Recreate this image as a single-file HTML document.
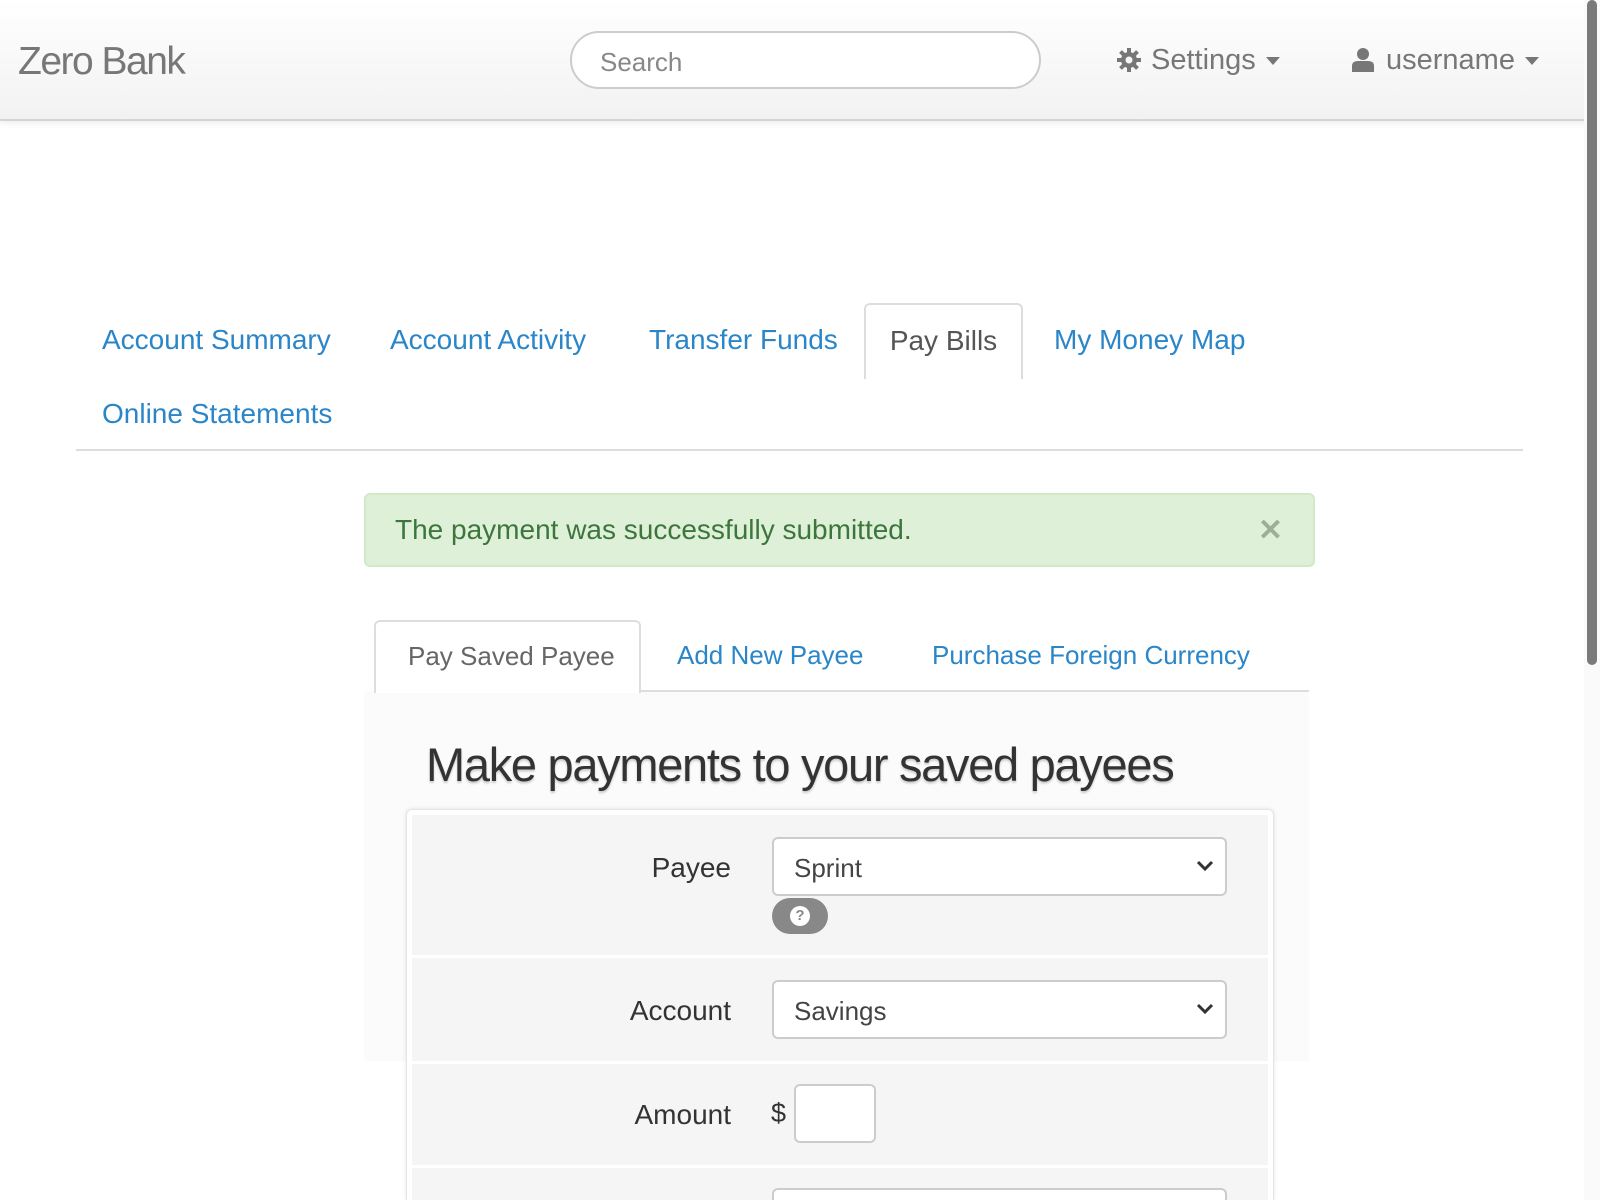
<!DOCTYPE html>
<html style="width:1600px;height:1200px;overflow:hidden"><head><style>
*{box-sizing:border-box}
body{margin:0;width:1600px;height:1200px;overflow:hidden;background:#fff;font-family:"Liberation Sans",Arial,sans-serif;position:relative}
.nav{position:absolute;left:0;top:0;width:1600px;height:121px;background:linear-gradient(#fff,#f2f2f2);border-bottom:2px solid #d4d4d4;box-shadow:0 2px 6px rgba(0,0,0,.08)}
.brand{position:absolute;left:18px;top:40px;font-size:39px;color:#777;letter-spacing:-1.5px}
.search{position:absolute;left:570px;top:31px;width:471px;height:58px;border:2px solid #ccc;border-radius:29px;background:#fff;font-size:26px;color:#888;padding:14px 28px}
.menu{position:absolute;top:44px;font-size:29px;color:#777}
.caret{display:inline-block;width:0;height:0;border-left:7px solid transparent;border-right:7px solid transparent;border-top:8px solid #777;vertical-align:middle;margin-left:10px}
.sb{position:absolute;right:0;top:0;width:16px;height:1200px;background:#fafafa}
.sb div{position:absolute;left:3px;top:0;width:10px;height:665px;border-radius:5px;background:#7a7a7a}
.tab{position:absolute;font-size:28px;color:#2a86c8}
.act{position:absolute;left:864px;top:303px;width:159px;height:76px;border:2px solid #ddd;border-bottom:none;border-radius:6px 6px 0 0;background:#fff;color:#555;font-size:28px;text-align:center;padding-top:20px}
.hr{position:absolute;left:76px;top:449px;width:1447px;height:2px;background:#ddd}
.alert{position:absolute;left:364px;top:493px;width:951px;height:74px;background:#dff0d8;border:2px solid #d0e9c6;border-radius:6px;color:#3c763d;font-size:28px;padding:19px 29px}
.alert span{position:absolute;right:30px;top:18px;font-size:30px;color:#9fae9a;font-weight:bold}
.pane{position:absolute;left:364px;top:691px;width:945px;height:370px;background:#fbfbfb}
.stab{position:absolute;font-size:26px;color:#2a86c8;top:640px}
.sact{position:absolute;left:374px;top:620px;width:267px;height:73px;border:2px solid #ddd;border-bottom:none;border-radius:6px 6px 0 0;background:#fff;color:#666;font-size:26px;padding:19px 0 0 32px}
.sline{position:absolute;left:641px;top:690px;width:668px;height:2px;background:#ddd}
h1{position:absolute;left:426px;top:737px;margin:0;font-size:47px;font-weight:normal;color:#333;letter-spacing:-1.3px;text-shadow:0 2px 2px rgba(0,0,0,.2)}
.form{position:absolute;left:406px;top:809px;width:868px;height:391px;background:#fff;border:1px solid #e5e5e5;border-bottom:none;border-radius:6px 6px 0 0;box-shadow:0 0 4px rgba(0,0,0,.1)}
.row{position:absolute;left:412px;width:856px;background:#f5f5f5;border-bottom:3px solid #fff}
.lbl{position:absolute;right:537px;font-size:28px;color:#333}
.sel{position:absolute;left:360px;width:455px;height:59px;background:#fff;border:2px solid #ccc;border-radius:6px;font-size:26px;color:#444;padding:14px 20px}
.sel svg{position:absolute;right:10px;top:20px}
</style></head><body>
<div class="nav">
<div class="brand">Zero Bank</div>
<div class="search">Search</div>
<div class="menu" style="left:1117px"><svg width="24" height="24" viewBox="0 0 24 24" style="vertical-align:-3px;margin-right:10px"><g fill="#777"><circle cx="12" cy="12" r="8"/><rect x="10" y="0" width="4" height="24"/><rect x="0" y="10" width="24" height="4"/><rect x="10" y="0" width="4" height="24" transform="rotate(45 12 12)"/><rect x="10" y="0" width="4" height="24" transform="rotate(-45 12 12)"/></g><circle cx="12" cy="12" r="3.5" fill="#f7f7f7"/></svg>Settings<span class="caret"></span></div>
<div class="menu" style="left:1352px"><svg width="22" height="24" viewBox="0 0 22 24" style="vertical-align:-3px;margin-right:12px"><circle cx="11" cy="6" r="6" fill="#777"/><path d="M0 24 V18 Q0 13 6 13 H16 Q22 13 22 18 V24Z" fill="#777"/></svg>username<span class="caret"></span></div>
</div>
<div class="sb"><div></div></div>
<div class="tab" style="left:102px;top:324px">Account Summary</div>
<div class="tab" style="left:390px;top:324px">Account Activity</div>
<div class="tab" style="left:649px;top:324px">Transfer Funds</div>
<div class="act">Pay Bills</div>
<div class="tab" style="left:1054px;top:324px">My Money Map</div>
<div class="tab" style="left:102px;top:398px">Online Statements</div>
<div class="hr"></div>
<div class="alert">The payment was successfully submitted.<span>✕</span></div>
<div class="pane"></div>
<div class="sact">Pay Saved Payee</div>
<div class="stab" style="left:677px">Add New Payee</div>
<div class="stab" style="left:932px">Purchase Foreign Currency</div>
<div class="sline"></div>
<h1>Make payments to your saved payees</h1>
<div class="form"></div>
<div class="row" style="top:815px;height:143px"><div class="lbl" style="top:37px">Payee</div><div class="sel" style="top:22px">Sprint<svg width="20" height="14" viewBox="0 0 20 14"><path d="M3 3 L10 10 L17 3" fill="none" stroke="#333" stroke-width="3"/></svg></div><div style="position:absolute;left:360px;top:83px;width:56px;height:36px;border-radius:18px;background:#888"><div style="position:absolute;left:18px;top:8px;width:20px;height:20px;border-radius:10px;background:#fff;color:#888;font-size:15px;font-weight:bold;text-align:center;line-height:20px">?</div></div></div>
<div class="row" style="top:958px;height:106px"><div class="lbl" style="top:37px">Account</div><div class="sel" style="top:22px">Savings<svg width="20" height="14" viewBox="0 0 20 14"><path d="M3 3 L10 10 L17 3" fill="none" stroke="#333" stroke-width="3"/></svg></div></div>
<div class="row" style="top:1064px;height:104px"><div class="lbl" style="top:35px">Amount</div><div style="position:absolute;left:359px;top:34px;font-size:27px;color:#333">$</div><div style="position:absolute;left:382px;top:20px;width:82px;height:59px;background:#fff;border:2px solid #ccc;border-radius:6px"></div></div>
<div class="row" style="top:1168px;height:32px;border-bottom:none;overflow:hidden"><div class="sel" style="top:20px"></div></div>
</body></html>
